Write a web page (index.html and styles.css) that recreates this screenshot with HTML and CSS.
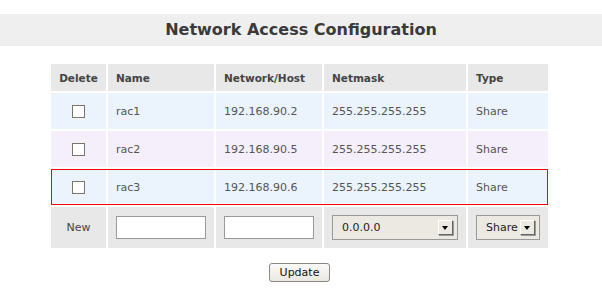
FILE: index.html
```html
<!DOCTYPE html>
<html lang="en">
<head>
    <meta charset="UTF-8">
    <title>Network Access Configuration</title>
    <link rel="stylesheet" href="styles.css">
</head>
<body>
    <h1 class="title">Network Access Configuration</h1>

    <table class="access">
        <tr class="head">
            <th class="col-del">Delete</th>
            <th class="col-name">Name</th>
            <th class="col-net">Network/Host</th>
            <th class="col-mask">Netmask</th>
            <th class="col-type">Type</th>
        </tr>
        <tr class="row odd">
            <td class="center"><input type="checkbox" class="check"></td>
            <td>rac1</td>
            <td>192.168.90.2</td>
            <td>255.255.255.255</td>
            <td>Share</td>
        </tr>
        <tr class="row even">
            <td class="center"><input type="checkbox" class="check"></td>
            <td>rac2</td>
            <td>192.168.90.5</td>
            <td>255.255.255.255</td>
            <td>Share</td>
        </tr>
        <tr class="row odd active">
            <td class="center"><input type="checkbox" class="check"></td>
            <td>rac3</td>
            <td>192.168.90.6</td>
            <td>255.255.255.255</td>
            <td>Share</td>
        </tr>
        <tr class="new">
            <td class="center">New</td>
            <td><input type="text" class="field"></td>
            <td><input type="text" class="field"></td>
            <td>
                <span class="select mask-select">
                    <span class="select-text">0.0.0.0</span>
                    <span class="arrow"></span>
                </span>
            </td>
            <td>
                <span class="select type-select">
                    <span class="select-text">Share</span>
                    <span class="arrow"></span>
                </span>
            </td>
        </tr>
    </table>

    <div class="actions">
        <button class="btn">Update</button>
    </div>
</body>
</html>
```

FILE: styles.css
```css
body {
    margin: 0;
    font-family: "DejaVu Sans", Verdana, sans-serif;
    background: #fff;
}

.title {
    margin: 14px 0 0;
    height: 32px;
    line-height: 32px;
    background: #efefef;
    color: #3a3a3a;
    font-size: 16px;
    font-weight: bold;
    text-align: center;
}

.access {
    border-collapse: separate;
    border-spacing: 2px;
    margin: 16px 0 0 49px;
    font-size: 11px;
    color: #555;
}

.access th,
.access td {
    padding: 0 8px;
    text-align: left;
}

.access th {
    height: 27px;
    background: #e8e8e8;
    color: #444;
    font-size: 10.5px;
    font-weight: bold;
}

.col-del { width: 39px; }
.col-name { width: 90px; }
.col-net { width: 90px; }
.col-mask { width: 126px; }
.col-type { width: 64px; }

.access th.col-del,
.access td.center {
    text-align: center;
}

.row td {
    height: 36px;
}

.odd td { background: #ebf4fc; }
.even td { background: #f5eefb; }

.active {
    outline: 1px solid #f00;
    outline-offset: -1px;
}

.check {
    appearance: none;
    display: block;
    margin: 0 auto;
    width: 13px;
    height: 13px;
    border: 1px solid #7b746b;
    background: #fff;
}

.new td {
    height: 41px;
    background: #e8e8e8;
    color: #444;
}

.field {
    display: block;
    box-sizing: border-box;
    width: 90px;
    height: 23px;
    margin: 0;
    border: 1px solid #999;
    background: #fff;
}

.select {
    display: flex;
    align-items: center;
    justify-content: space-between;
    box-sizing: border-box;
    height: 25px;
    padding: 0 4px 0 9px;
    border: 1px solid #999;
    background: #ece9e2;
    color: #222;
    font-size: 11px;
}

.mask-select { width: 126px; }
.type-select { width: 64px; }

.arrow {
    position: relative;
    box-sizing: border-box;
    width: 15px;
    height: 15px;
    background: #ece9e2;
    border-top: 1px solid #fff;
    border-left: 1px solid #fff;
    border-right: 1px solid #666;
    border-bottom: 1px solid #666;
    box-shadow: 1px 1px 0 #999;
}

.arrow::after {
    content: "";
    position: absolute;
    left: 3px;
    top: 5px;
    border-left: 3px solid transparent;
    border-right: 3px solid transparent;
    border-top: 4px solid #000;
}

.actions {
    display: flex;
    justify-content: center;
    margin-top: 13px;
    padding-right: 3px;
}

.btn {
    width: 61px;
    height: 19px;
    padding: 0;
    border: 1px solid #8a8680;
    border-radius: 3px;
    background: linear-gradient(#fbfaf8, #ebe8e2);
    color: #111;
    font-family: "DejaVu Sans", Verdana, sans-serif;
    font-size: 11px;
}
```
